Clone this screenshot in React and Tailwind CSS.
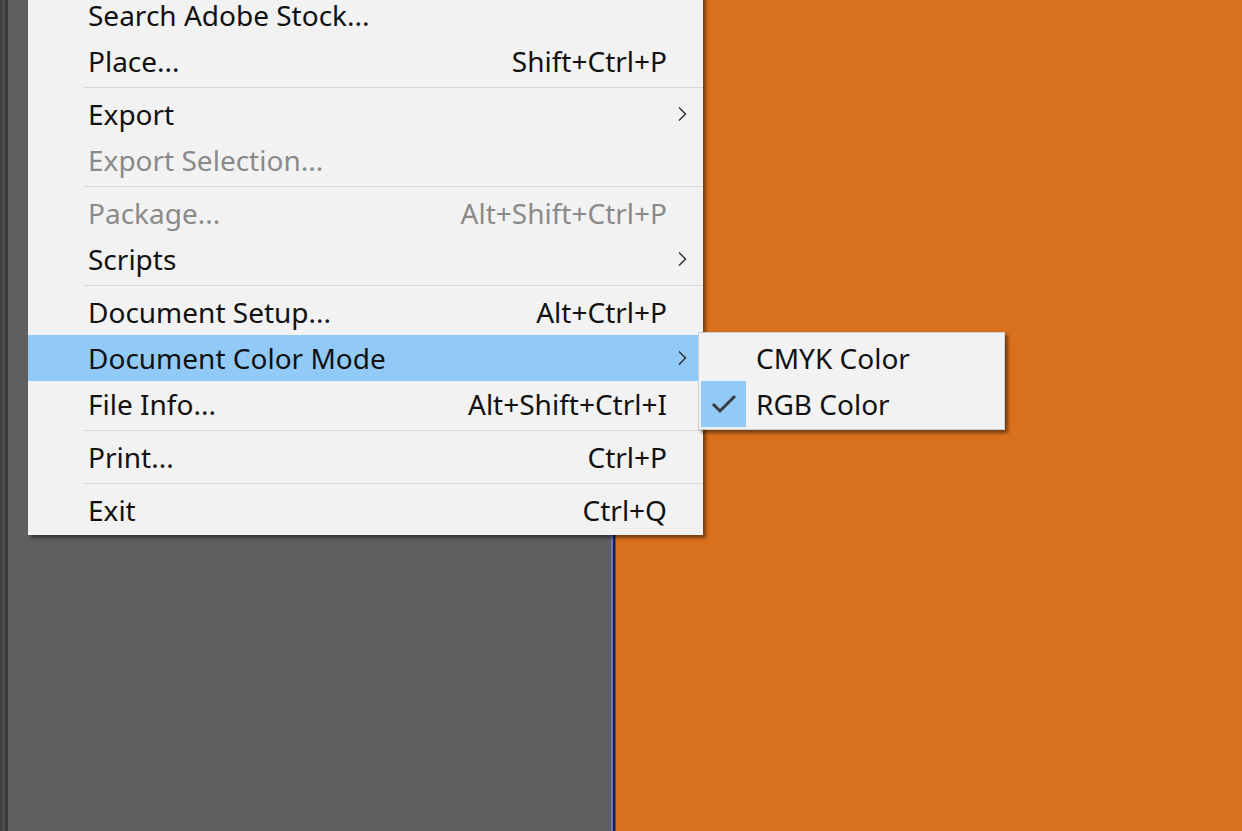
import React from "react";

const items = [
  { label: "Search Adobe Stock..." },
  { label: "Place...", shortcut: "Shift+Ctrl+P" },
  { sep: true },
  { label: "Export", sub: true },
  { label: "Export Selection...", disabled: true },
  { sep: true },
  { label: "Package...", shortcut: "Alt+Shift+Ctrl+P", disabled: true },
  { label: "Scripts", sub: true },
  { sep: true },
  { label: "Document Setup...", shortcut: "Alt+Ctrl+P" },
  { label: "Document Color Mode", sub: true, active: true },
  { label: "File Info...", shortcut: "Alt+Shift+Ctrl+I" },
  { sep: true },
  { label: "Print...", shortcut: "Ctrl+P" },
  { sep: true },
  { label: "Exit", shortcut: "Ctrl+Q" },
];

const Chevron = () => (
  <svg width="10" height="16" viewBox="0 0 10 16" className="text-[#333]">
    <path d="M2 1.5 L8.5 8 L2 14.5" fill="none" stroke="currentColor" strokeWidth="1.5" />
  </svg>
);

const Check = () => (
  <svg width="26" height="20" viewBox="0 0 26 20">
    <path d="M2 10 L9 17 L24 2" fill="none" stroke="#3c3c3c" strokeWidth="3" />
  </svg>
);

const App = () => {
  return (
    <div
      className="relative w-[1242px] h-[831px] overflow-hidden flex"
      style={{ fontFamily: '"Noto Sans", "Open Sans", sans-serif' }}
    >
      {/* background panels */}
      <div className="flex w-[8px]">
        <div className="w-[2px] bg-[#3f3f3f]"></div>
        <div className="w-[3px] bg-[#4e4e4e]"></div>
        <div className="w-[3px] bg-[#3a3a3a]"></div>
      </div>
      <div className="w-[603px] bg-[#5f5f5f]"></div>
      <div className="w-[2px] bg-[#6c74c4]"></div>
      <div className="w-[2px] bg-[#1b1b4e]"></div>
      <div className="w-[1px] bg-[#4a52a0]"></div>
      <div className="flex-1 bg-[#d9701d]"></div>

      {/* file menu */}
      <div className="absolute left-[28px] top-[-8px] w-[675px] pb-[2px] bg-[#f2f2f2] shadow-[3px_3px_3px_rgba(0,0,0,0.45)]">
        {items.map((it, i) =>
          it.sep ? (
            <div key={i} className="h-[7px] flex items-center pl-[55px]">
              <div className="h-px w-full bg-[#d6d6d6]"></div>
            </div>
          ) : (
            <div
              key={i}
              className={`h-[46px] flex items-center pl-[60px] pr-[36px] text-[28px] whitespace-nowrap ${
                it.active ? "bg-[#91c9f7]" : ""
              } ${it.disabled ? "text-[#8a8a8a]" : "text-[#111]"}`}
            >
              <span className="flex-1">{it.label}</span>
              {it.shortcut && <span>{it.shortcut}</span>}
              {it.sub && (
                <span className="mr-[-20px] flex">
                  <Chevron />
                </span>
              )}
            </div>
          )
        )}
      </div>

      {/* color mode submenu */}
      <div className="absolute left-[698px] top-[332px] w-[307px] bg-[#f2f2f2] border border-[#cfcfcf] shadow-[3px_3px_3px_rgba(0,0,0,0.45)] p-[2px]">
        <div className="h-[46px] flex items-center text-[28px] text-[#111]">
          <div className="w-[45px] h-full"></div>
          <span className="pl-[10px]">CMYK Color</span>
        </div>
        <div className="h-[46px] flex items-center text-[28px] text-[#111]">
          <div className="w-[45px] h-full bg-[#91c9f7] flex items-center justify-center">
            <Check />
          </div>
          <span className="pl-[10px]">RGB Color</span>
        </div>
      </div>
    </div>
  );
};

export default App;
